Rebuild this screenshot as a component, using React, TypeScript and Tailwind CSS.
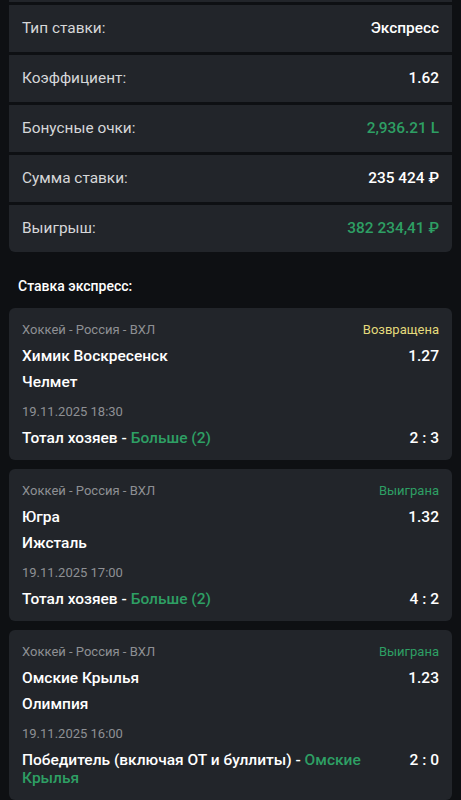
const summary = [
  { label: "Коэффициент:", value: "1.62", tone: "text-white" },
  { label: "Бонусные очки:", value: "2,936.21 L", tone: "text-[#2e9f64]" },
  { label: "Сумма ставки:", value: "235 424 ₽", tone: "text-white" },
  { label: "Выигрыш:", value: "382 234,41 ₽", tone: "text-[#2e9f64]" },
];

const bets = [
  {
    status: "Возвращена",
    statusTone: "text-[#e4da7c]",
    home: "Химик Воскресенск",
    away: "Челмет",
    odd: "1.27",
    date: "19.11.2025 18:30",
    market: "Тотал хозяев - ",
    pick: "Больше (2)",
    score: "2 : 3",
  },
  {
    status: "Выиграна",
    statusTone: "text-[#2e9f64]",
    home: "Югра",
    away: "Ижсталь",
    odd: "1.32",
    date: "19.11.2025 17:00",
    market: "Тотал хозяев - ",
    pick: "Больше (2)",
    score: "4 : 2",
  },
  {
    status: "Выиграна",
    statusTone: "text-[#2e9f64]",
    home: "Омские Крылья",
    away: "Олимпия",
    odd: "1.23",
    date: "19.11.2025 16:00",
    market: "Победитель (включая ОТ и буллиты) - ",
    pick: "Омские Крылья",
    score: "2 : 0",
  },
];

function SummaryRow({ label, value, tone }: { label: string; value: string; tone: string }) {
  return (
    <div className="flex h-[47px] items-center justify-between bg-[#22252a] px-[13px]">
      <span className="text-[15.4px] text-[#d6d7d9]">{label}</span>
      <span className={`text-[15.4px] font-medium ${tone}`}>{value}</span>
    </div>
  );
}

export default function App() {
  return (
    <div
      className="h-[800px] overflow-hidden bg-[#0e1013] px-[9px]"
      style={{ fontFamily: "Roboto, 'Noto Sans', sans-serif" }}
    >
      {/* summary table, top row cut off by the screenshot */}
      <div className="flex flex-col gap-[3px] overflow-hidden rounded-b-[6px]">
        <div className="h-[2px] bg-[#22252a]" />
        <SummaryRow label="Тип ставки:" value="Экспресс" tone="text-white" />
        {summary.map((row) => (
          <SummaryRow key={row.label} {...row} />
        ))}
      </div>

      <p className="mt-[24px] mb-[12px] h-[20px] pl-[9px] text-[14px] font-medium leading-[20px] text-white">Ставка экспресс:</p>

      <div className="flex flex-col gap-[9px]">
        {bets.map((bet) => (
          <div key={bet.home} className="rounded-[6px] bg-[#22252a] px-[13px] pt-[13px] pb-[13px]">
            <div className="flex h-[18px] items-center justify-between text-[13px]">
              <span className="text-[#8e9094]">Хоккей - Россия - ВХЛ</span>
              <span className={bet.statusTone}>{bet.status}</span>
            </div>
            <div className="mt-[8px] flex h-[20px] items-center justify-between text-[15.5px] font-medium text-white">
              <span>{bet.home}</span>
              <span>{bet.odd}</span>
            </div>
            <div className="mt-[6px] flex h-[20px] items-center text-[15.5px] font-medium text-white">{bet.away}</div>
            <div className="mt-[10px] flex h-[18px] items-center text-[13px] text-[#8e9094]">{bet.date}</div>
            <div className="mt-[8px] flex items-start justify-between gap-4 text-[15.5px] font-medium leading-[18px] text-white">
              <p>
                {bet.market}
                <span className="text-[#2e9f64]">{bet.pick}</span>
              </p>
              <span className="shrink-0">{bet.score}</span>
            </div>
          </div>
        ))}
      </div>
    </div>
  );
}
